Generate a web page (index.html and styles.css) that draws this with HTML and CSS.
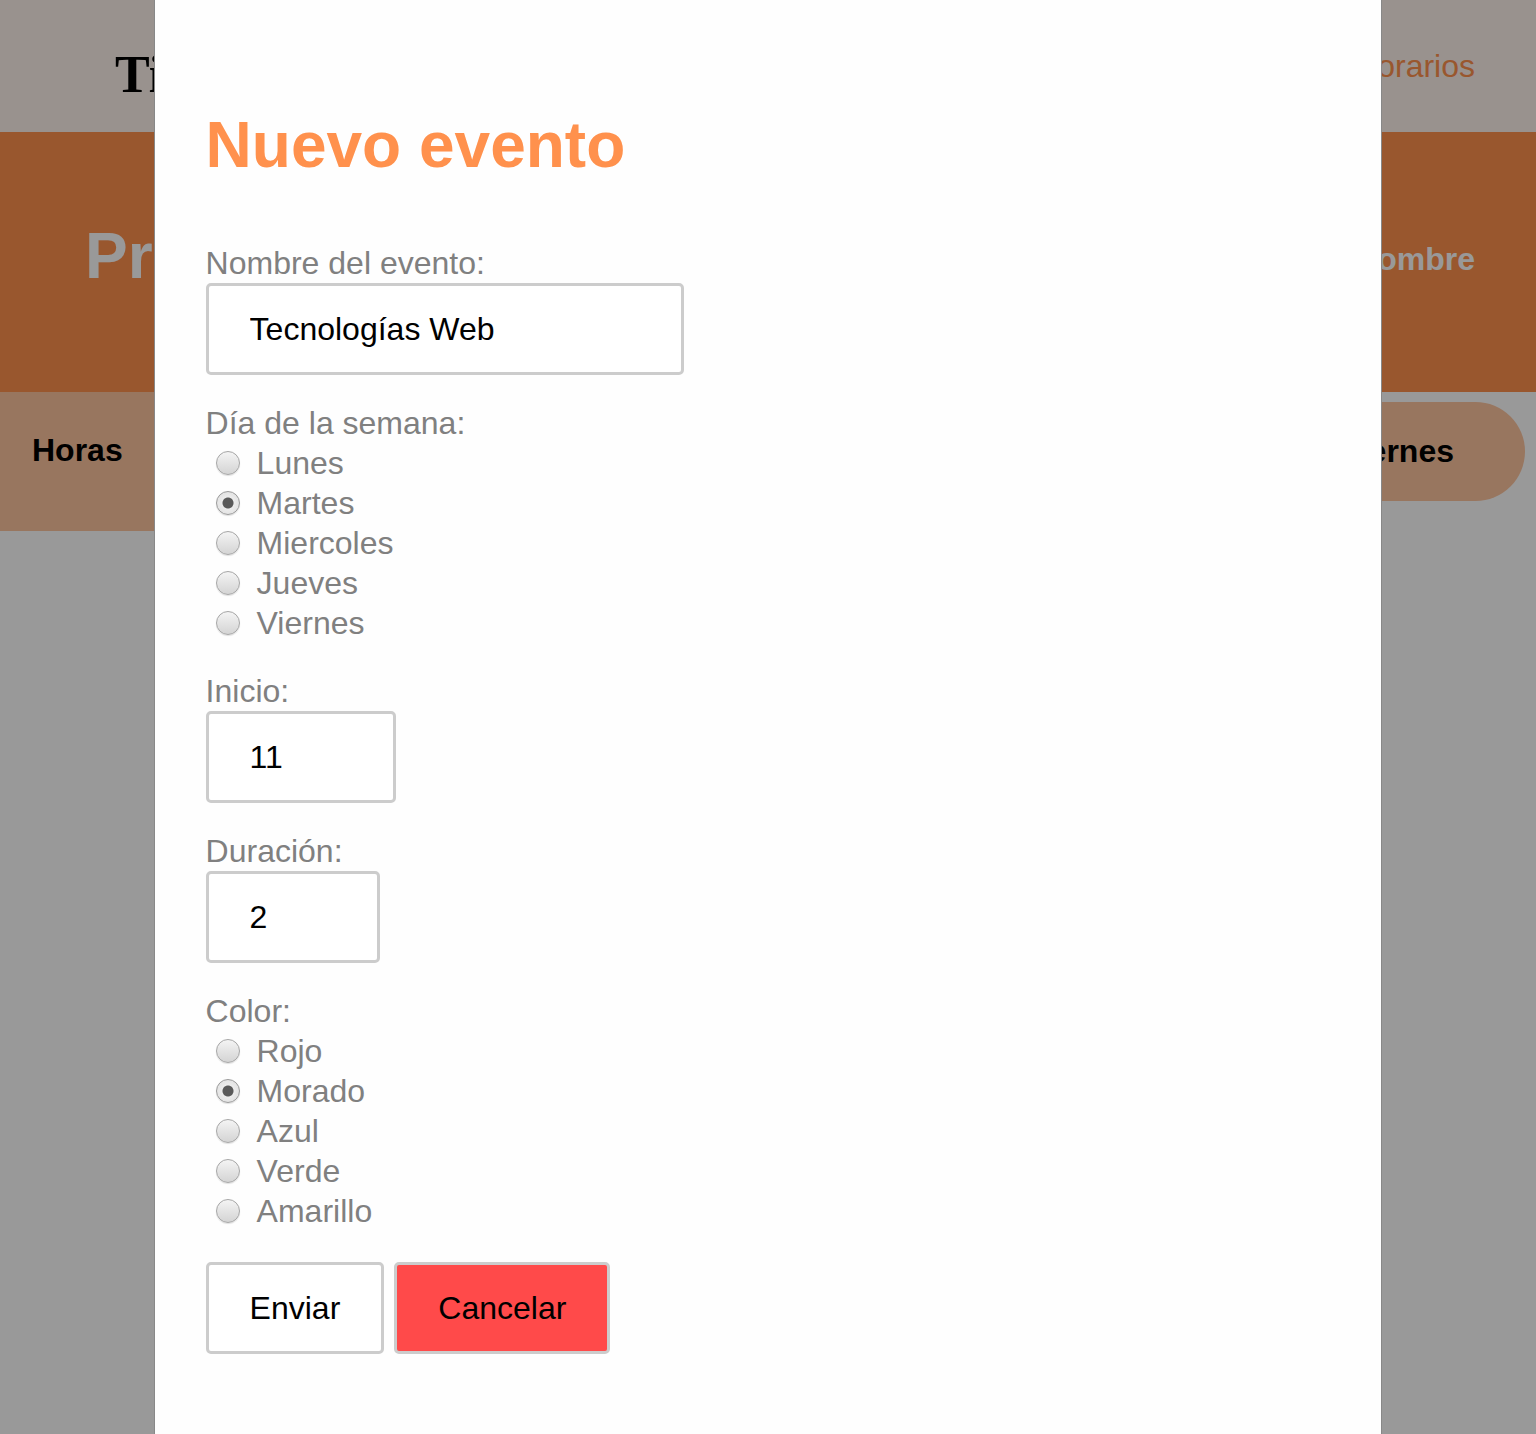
FILE: index.html
```html
<!DOCTYPE html>
<html lang="es">
<head>
<meta charset="utf-8">
<title>Horarios</title>
<link rel="stylesheet" href="styles.css">
</head>
<body>
<header class="site-header">
  <div class="brand">Timetable</div>
  <nav class="nav"><a class="nav-link">Horarios</a></nav>
</header>
<section class="banner">
  <h2 class="banner-title">Programa</h2>
  <div class="banner-user">Nombre</div>
</section>
<div class="week-head">
  <div class="hours-cell">Horas</div>
  <div class="days-pill">
    <span class="day">Viernes</span>
  </div>
</div>

<div class="overlay">
  <div class="modal">
    <h1 class="modal-title">Nuevo evento</h1>
    <form class="event-form">
      <div class="field">
        <label class="field-label" for="nombre">Nombre del evento:</label>
        <input class="text-input input-name" id="nombre" type="text" value="Tecnologías Web">
      </div>
      <div class="field">
        <span class="field-label">Día de la semana:</span>
        <label class="radio-row"><input class="radio" type="radio" name="dia"><span>Lunes</span></label>
        <label class="radio-row"><input class="radio" type="radio" name="dia" checked><span>Martes</span></label>
        <label class="radio-row"><input class="radio" type="radio" name="dia"><span>Miercoles</span></label>
        <label class="radio-row"><input class="radio" type="radio" name="dia"><span>Jueves</span></label>
        <label class="radio-row"><input class="radio" type="radio" name="dia"><span>Viernes</span></label>
      </div>
      <div class="field">
        <label class="field-label" for="inicio">Inicio:</label>
        <input class="text-input input-start" id="inicio" type="text" value="11">
      </div>
      <div class="field">
        <label class="field-label" for="duracion">Duración:</label>
        <input class="text-input input-duration" id="duracion" type="text" value="2">
      </div>
      <div class="field">
        <span class="field-label">Color:</span>
        <label class="radio-row"><input class="radio" type="radio" name="color"><span>Rojo</span></label>
        <label class="radio-row"><input class="radio" type="radio" name="color" checked><span>Morado</span></label>
        <label class="radio-row"><input class="radio" type="radio" name="color"><span>Azul</span></label>
        <label class="radio-row"><input class="radio" type="radio" name="color"><span>Verde</span></label>
        <label class="radio-row"><input class="radio" type="radio" name="color"><span>Amarillo</span></label>
      </div>
      <div class="actions">
        <button class="btn btn-send" type="button">Enviar</button>
        <button class="btn btn-cancel" type="button">Cancelar</button>
      </div>
    </form>
  </div>
</div>
</body>
</html>
```

FILE: styles.css
```css
* { box-sizing: border-box; }

html, body {
  margin: 0;
  padding: 0;
  background: #ffffff;
  font-family: "Liberation Sans", Arial, sans-serif;
}

/* ---------- page under the modal ---------- */
.site-header {
  height: 132px;
  background: #fff3ed;
  display: flex;
  align-items: center;
  justify-content: space-between;
  padding: 0 61px 0 115px;
}
.brand {
  font-family: "Liberation Serif", "Times New Roman", serif;
  font-weight: bold;
  font-size: 52px;
  color: #000;
  margin-top: 16px;
}
.nav-link {
  font-size: 32px;
  color: #ff914d;
}

.banner {
  height: 260px;
  background: #ff914d;
  display: flex;
  align-items: flex-start;
  justify-content: space-between;
  padding: 0 61px 0 85px;
}
.banner-title {
  margin: 0;
  padding-top: 87px;
  font-size: 64px;
  font-weight: bold;
  color: #ffffff;
}
.banner-user {
  padding-top: 109px;
  font-size: 32px;
  font-weight: bold;
  color: #ffffff;
}

.week-head {
  display: flex;
  align-items: flex-start;
}
.hours-cell {
  width: 200px;
  height: 139px;
  background: #fec59f;
  font-size: 32px;
  font-weight: bold;
  color: #000;
  padding: 40px 0 0 32px;
}
.days-pill {
  flex: 1;
  margin: 10px 11px 0 0;
  height: 99px;
  background: #fec59f;
  border-radius: 0 50px 50px 0;
  display: flex;
  align-items: center;
  justify-content: flex-end;
  padding: 0 71px 0 40px;
  font-size: 32px;
  font-weight: bold;
  color: #000;
}

/* ---------- modal ---------- */
.overlay {
  position: fixed;
  inset: 0;
  background: rgba(0, 0, 0, 0.4);
  overflow: hidden;
}
.modal {
  width: 80%;
  min-height: 100%;
  margin: 0 auto;
  background: #fefefe;
  border: 1px solid #888;
  border-top: 0;
  border-bottom: 0;
  padding: 108px 51px 40px 51px;
}
.modal-title {
  margin: 0;
  font-size: 64px;
  font-weight: bold;
  line-height: 74px;
  color: #ff914d;
}

.event-form {
  margin-top: 63px;
  display: flex;
  flex-direction: column;
}
.field {
  display: flex;
  flex-direction: column;
  align-items: flex-start;
  margin-bottom: 30px;
}
.field-label {
  font-size: 32px;
  line-height: 36px;
  padding-bottom: 2px;
  color: #808080;
}

.text-input {
  height: 92px;
  border: 3px solid #cccccc;
  border-radius: 5px;
  padding: 0 41px;
  font-family: "Liberation Sans", Arial, sans-serif;
  font-size: 32px;
  color: #000;
  background: #fff;
  margin: 0;
  outline: none;
}
.input-name { width: 478px; }
.input-start { width: 190px; }
.input-duration { width: 174px; }

.radio-row {
  display: flex;
  align-items: center;
  height: 40px;
  font-size: 32px;
  color: #808080;
}
.radio {
  -webkit-appearance: none;
  appearance: none;
  width: 24px;
  height: 24px;
  margin: 0 17px 0 10px;
  border-radius: 50%;
  border: 1px solid #a6a6a6;
  background: linear-gradient(#f4f4f4, #d4d4d4);
  box-shadow: 0 1px 1px rgba(0, 0, 0, 0.12);
  flex: none;
}
.radio:checked {
  border-color: #9a9a9a;
  background: radial-gradient(circle, #5a5a5a 0, #5a5a5a 5px, #ececec 6px, #dcdcdc 100%);
}

.actions {
  display: flex;
  gap: 10px;
  margin-top: 1px;
}
.btn {
  font-family: "Liberation Sans", Arial, sans-serif;
  font-size: 32px;
  line-height: 38px;
  padding: 24px 41px;
  border: 3px solid #cccccc;
  border-radius: 5px;
  color: #000;
  margin: 0;
}
.btn-send { background: #ffffff; }
.btn-cancel { background: #ff4a4a; }
```
